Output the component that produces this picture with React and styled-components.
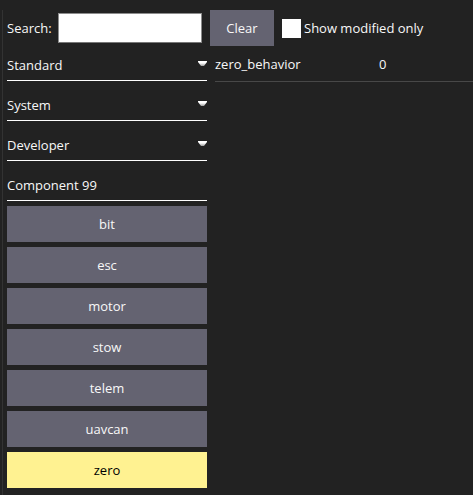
import React, { useState } from "react";
import styled, { createGlobalStyle } from "styled-components";

const GlobalStyle = createGlobalStyle`
  * { box-sizing: border-box; }
  body {
    margin: 0;
    background: #222222;
    color: #f8f8f8;
    font-family: "Open Sans", "Noto Sans", sans-serif;
    font-size: 13px;
    line-height: 18px;
  }
  button, input { font: inherit; }
`;

const Page = styled.div`
  min-height: 100vh;
  padding: 10px 0 0 2px;
  display: flex;
`;

const Panel = styled.main`
  flex: 1;
  min-width: 0;
  border-left: 1px solid #333333;
  padding: 0 0 5px 4px;
`;

const Toolbar = styled.div`
  display: flex;
  align-items: center;
  gap: 8px;
`;

const SearchLabel = styled.label`
  flex: 0 0 43px;
  min-width: 0;
  white-space: nowrap;
`;

const SearchInput = styled.input`
  width: 144px;
  height: 30px;
  padding: 0 6px;
  background: #ffffff;
  color: #000000;
  border: 1px solid #8c8c8c;
  border-bottom-color: #777777;
  border-radius: 0;
`;

const Button = styled.button`
  height: 36px;
  min-width: 64px;
  padding: 0 12px;
  border: 0;
  background: ${(p) => (p.$active ? "#fff291" : "#646371")};
  color: ${(p) => (p.$active ? "#000000" : "#f8f8f8")};
`;

const CheckLabel = styled.label`
  display: flex;
  align-items: center;
  gap: 3px;
  white-space: nowrap;
`;

const Checkbox = styled.input`
  appearance: none;
  width: 19px;
  height: 19px;
  margin: 0;
  background: #ffffff;

  &:checked {
    border: 5px solid #ffffff;
    background: #222222;
  }
`;

const Body = styled.div`
  display: flex;
  align-items: flex-start;
  gap: 8px;
`;

const Groups = styled.nav`
  flex: 0 0 200px;
  display: flex;
  flex-direction: column;
  gap: 5px;
`;

const GroupHeader = styled.button`
  display: flex;
  justify-content: space-between;
  align-items: center;
  height: 35px;
  padding: 3px 0 0;
  border: 0;
  border-bottom: 1px solid #ffffff;
  background: none;
  color: inherit;
  text-align: left;
`;

const Arrow = styled.svg`
  width: 9px;
  height: 5px;
  margin-bottom: 3px;
`;

const Parameters = styled.table`
  flex: 1;
  border-spacing: 0;
  table-layout: fixed;
`;

const Name = styled.th`
  width: 164px;
  height: 36px;
  padding: 0;
  border-bottom: 1px solid #484848;
  font-weight: 400;
  text-align: left;
`;

const Value = styled.td`
  padding: 0;
  border-bottom: 1px solid #484848;
`;

const sections = ["Standard", "System", "Developer"];
const groups = ["bit", "esc", "motor", "stow", "telem", "uavcan", "zero"];

export default function App() {
  const [search, setSearch] = useState("");
  const [active, setActive] = useState("zero");

  return (
    <>
      <GlobalStyle />
      <Page>
        <Panel>
          <Toolbar>
            <SearchLabel htmlFor="search">Search:</SearchLabel>
            <SearchInput
              id="search"
              type="text"
              value={search}
              onChange={(e) => setSearch(e.target.value)}
            />
            <Button type="button" onClick={() => setSearch("")}>Clear</Button>
            <CheckLabel>
              <Checkbox type="checkbox" />
              Show modified only
            </CheckLabel>
          </Toolbar>
          <Body>
            <Groups>
              {sections.map((name) => (
                <GroupHeader key={name} type="button">
                  {name}
                  <Arrow viewBox="0 0 9 5" aria-hidden="true">
                    <defs>
                      <linearGradient id={`arrow-${name}`} x1="0" y1="0" x2="0" y2="1">
                        <stop offset="0.4" stopColor="#ffffff" />
                        <stop offset="1" stopColor="#999999" />
                      </linearGradient>
                    </defs>
                    <path d="M0 0h9v1L6 5H3L0 1Z" fill={`url(#arrow-${name})`} />
                  </Arrow>
                </GroupHeader>
              ))}
              <GroupHeader type="button">Component 99</GroupHeader>
              {groups.map((name) => (
                <Button
                  key={name}
                  type="button"
                  $active={name === active}
                  onClick={() => setActive(name)}
                >
                  {name}
                </Button>
              ))}
            </Groups>
            <Parameters>
              <tbody>
                <tr>
                  <Name scope="row">zero_behavior</Name>
                  <Value>0</Value>
                </tr>
              </tbody>
            </Parameters>
          </Body>
        </Panel>
      </Page>
    </>
  );
}
